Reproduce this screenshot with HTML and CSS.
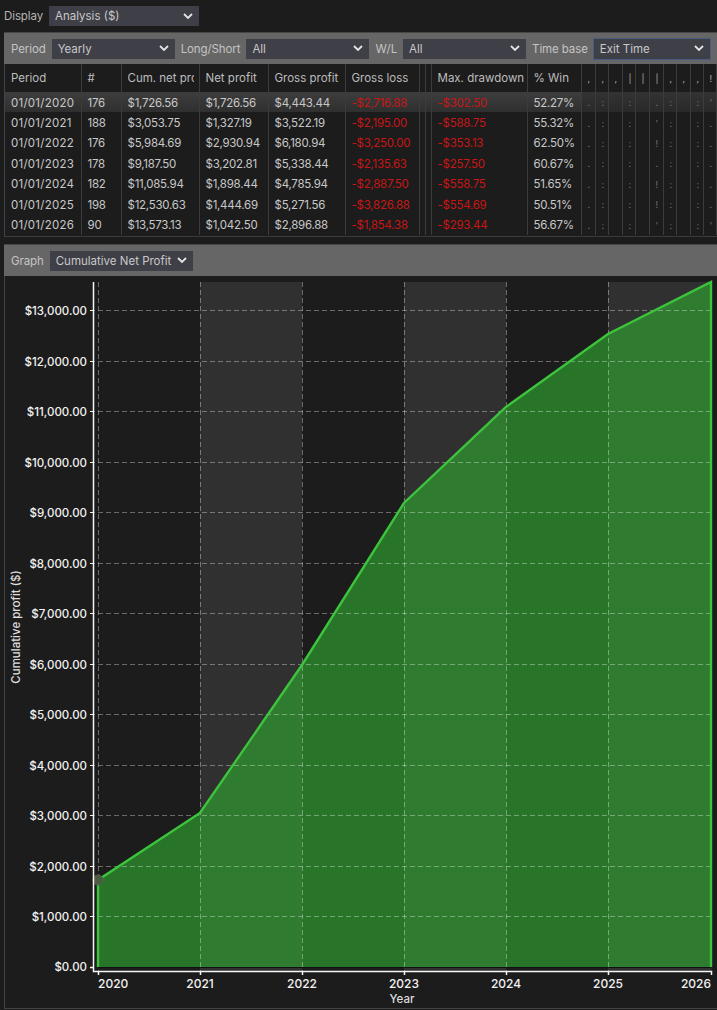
FILE: index.html
```html
<!DOCTYPE html>
<html lang="en">
<head>
    <meta charset="UTF-8">
    <meta name="viewport" content="width=device-width, initial-scale=1.0">
    <title>Analysis</title>
    <link rel="stylesheet" href="styles.css">
</head>
<body>
    <svg width="0" height="0" class="defs">
        <symbol id="chevron" viewBox="0 0 10 7"><path d="M1 1l4 4 4-4" fill="none" stroke="currentColor" stroke-width="1.8"/></symbol>
    </svg>

    <div class="display-row">
        <span class="label">Display</span>
        <div class="select select-display"><span>Analysis ($)</span><svg class="chevron"><use href="#chevron"/></svg></div>
    </div>

    <div class="bar">
        <span class="label">Period</span>
        <div class="select select-filter"><span>Yearly</span><svg class="chevron"><use href="#chevron"/></svg></div>
        <span class="label">Long/Short</span>
        <div class="select select-filter"><span>All</span><svg class="chevron"><use href="#chevron"/></svg></div>
        <span class="label">W/L</span>
        <div class="select select-filter"><span>All</span><svg class="chevron"><use href="#chevron"/></svg></div>
        <span class="label">Time base</span>
        <div class="select select-time"><span>Exit Time</span><svg class="chevron"><use href="#chevron"/></svg></div>
    </div>

    <div class="stats-wrap">
        <table class="stats">
            <colgroup>
                <col class="c-period"><col class="c-count"><col class="c-cum"><col class="c-net"><col class="c-gross">
                <col class="c-loss"><col class="c-gap"><col class="c-gap"><col class="c-dd"><col class="c-win">
                <col class="c-wide"><col class="c-thin"><col class="c-wide"><col class="c-thin"><col class="c-wide">
                <col class="c-wide"><col class="c-thin"><col class="c-wide"><col class="c-thin"><col class="c-thin">
            </colgroup>
            <thead>
                <tr>
                    <th>Period</th><th>#</th><th><span class="clip">Cum. net profit</span></th><th>Net profit</th><th>Gross profit</th>
                    <th>Gross loss</th><th></th><th></th><th>Max. drawdown</th><th>% Win</th>
                    <th class="tiny">,</th><th class="tiny">,</th><th class="tiny">,</th><th class="tiny">|</th><th class="tiny">|</th>
                    <th class="tiny">|</th><th class="tiny">,</th><th class="tiny">,</th><th class="tiny">,</th><th class="tiny">!</th>
                </tr>
            </thead>
            <tbody>
                <tr class="selected">
                    <td>01/01/2020</td><td>176</td><td>$1,726.56</td><td>$1,726.56</td><td>$4,443.44</td>
                    <td class="neg">-$2,716.88</td><td></td><td></td><td class="neg">-$302.50</td><td>52.27%</td>
                    <td class="tiny">.</td><td class="tiny">:</td><td class="tiny"></td><td class="tiny">:</td><td class="tiny"></td>
                    <td class="tiny">.</td><td class="tiny">:</td><td class="tiny"></td><td class="tiny">:</td><td class="tiny">'</td>
                </tr>
                <tr>
                    <td>01/01/2021</td><td>188</td><td>$3,053.75</td><td>$1,327.19</td><td>$3,522.19</td>
                    <td class="neg">-$2,195.00</td><td></td><td></td><td class="neg">-$588.75</td><td>55.32%</td>
                    <td class="tiny">.</td><td class="tiny">:</td><td class="tiny"></td><td class="tiny">:</td><td class="tiny"></td>
                    <td class="tiny">'</td><td class="tiny">:</td><td class="tiny"></td><td class="tiny">:</td><td class="tiny">.</td>
                </tr>
                <tr>
                    <td>01/01/2022</td><td>176</td><td>$5,984.69</td><td>$2,930.94</td><td>$6,180.94</td>
                    <td class="neg">-$3,250.00</td><td></td><td></td><td class="neg">-$353.13</td><td>62.50%</td>
                    <td class="tiny">.</td><td class="tiny">:</td><td class="tiny"></td><td class="tiny">:</td><td class="tiny"></td>
                    <td class="tiny">!</td><td class="tiny">:</td><td class="tiny"></td><td class="tiny">:</td><td class="tiny">.</td>
                </tr>
                <tr>
                    <td>01/01/2023</td><td>178</td><td>$9,187.50</td><td>$3,202.81</td><td>$5,338.44</td>
                    <td class="neg">-$2,135.63</td><td></td><td></td><td class="neg">-$257.50</td><td>60.67%</td>
                    <td class="tiny">.</td><td class="tiny">:</td><td class="tiny"></td><td class="tiny">:</td><td class="tiny"></td>
                    <td class="tiny">.</td><td class="tiny">:</td><td class="tiny"></td><td class="tiny">:</td><td class="tiny">.</td>
                </tr>
                <tr>
                    <td>01/01/2024</td><td>182</td><td>$11,085.94</td><td>$1,898.44</td><td>$4,785.94</td>
                    <td class="neg">-$2,887.50</td><td></td><td></td><td class="neg">-$558.75</td><td>51.65%</td>
                    <td class="tiny">.</td><td class="tiny">:</td><td class="tiny"></td><td class="tiny">:</td><td class="tiny"></td>
                    <td class="tiny">!</td><td class="tiny">:</td><td class="tiny"></td><td class="tiny">:</td><td class="tiny">.</td>
                </tr>
                <tr>
                    <td>01/01/2025</td><td>198</td><td>$12,530.63</td><td>$1,444.69</td><td>$5,271.56</td>
                    <td class="neg">-$3,826.88</td><td></td><td></td><td class="neg">-$554.69</td><td>50.51%</td>
                    <td class="tiny">.</td><td class="tiny">:</td><td class="tiny"></td><td class="tiny">:</td><td class="tiny"></td>
                    <td class="tiny">!</td><td class="tiny">:</td><td class="tiny"></td><td class="tiny">:</td><td class="tiny">.</td>
                </tr>
                <tr>
                    <td>01/01/2026</td><td>90</td><td>$13,573.13</td><td>$1,042.50</td><td>$2,896.88</td>
                    <td class="neg">-$1,854.38</td><td></td><td></td><td class="neg">-$293.44</td><td>56.67%</td>
                    <td class="tiny">.</td><td class="tiny">:</td><td class="tiny"></td><td class="tiny">:</td><td class="tiny"></td>
                    <td class="tiny">'</td><td class="tiny">:</td><td class="tiny"></td><td class="tiny">:</td><td class="tiny">'</td>
                </tr>
            </tbody>
        </table>
    </div>

    <div class="bar">
        <span class="label">Graph</span>
        <div class="select select-graph"><span>Cumulative Net Profit</span><svg class="chevron"><use href="#chevron"/></svg></div>
    </div>

    <div class="chart">
        <svg class="plot" width="713" height="732" viewBox="4 276 713 732">
            <g class="bands">
                <rect x="200" y="282" width="102" height="689"/>
                <rect x="404" y="282" width="102" height="689"/>
                <rect x="608" y="282" width="103.500" height="689"/>
            </g>
            <path class="area" d="M98 967V880L200 813 302 665 404 503 506 407 608 334 711 282V967Z"/>
            <path class="base" d="M98 967.500H711"/>
            <g class="grid">
                <path d="M90 310.500H711M90 361.500H711M90 411.500H711M90 462.500H711M90 512.500H711M90 563.500H711M90 613.500H711M90 664.500H711M90 714.500H711M90 765.500H711M90 815.500H711M90 866.500H711M90 916.500H711"/>
                <path d="M98.500 282V975M200.500 282V975M302.500 282V975M404.500 282V975M506.500 282V975M608.500 282V975"/>
            </g>
            <path class="line" d="M98 967V880L200 813 302 665 404 503 506 407 608 334 711 282V967"/>
            <circle class="marker" cx="98" cy="880" r="5"/>
            <path class="axis" d="M93.500 282V971.500H711.500V975M90 967.500H93.500M98.500 971.500V975M200.500 971.500V975M302.500 971.500V975M404.500 971.500V975M506.500 971.500V975M608.500 971.500V975"/>
            <path class="ticks" d="M90 310.500H93M90 361.500H93M90 411.500H93M90 462.500H93M90 512.500H93M90 563.500H93M90 613.500H93M90 664.500H93M90 714.500H93M90 765.500H93M90 815.500H93M90 866.500H93M90 916.500H93"/>
            <g class="y-labels">
                <text x="87" y="314.500">$13,000.00</text>
                <text x="87" y="365.500">$12,000.00</text>
                <text x="87" y="415.500">$11,000.00</text>
                <text x="87" y="466.500">$10,000.00</text>
                <text x="87" y="516.500">$9,000.00</text>
                <text x="87" y="567.500">$8,000.00</text>
                <text x="87" y="617.500">$7,000.00</text>
                <text x="87" y="668.500">$6,000.00</text>
                <text x="87" y="718.500">$5,000.00</text>
                <text x="87" y="769.500">$4,000.00</text>
                <text x="87" y="819.500">$3,000.00</text>
                <text x="87" y="870.500">$2,000.00</text>
                <text x="87" y="920.500">$1,000.00</text>
                <text x="87" y="971">$0.00</text>
            </g>
            <g class="x-labels">
                <text x="98" y="988" class="start">2020</text>
                <text x="200" y="988">2021</text>
                <text x="302" y="988">2022</text>
                <text x="404" y="988">2023</text>
                <text x="506" y="988">2024</text>
                <text x="608" y="988">2025</text>
                <text x="711" y="988" class="end">2026</text>
            </g>
            <text class="title" x="402" y="1003">Year</text>
            <text class="title" transform="translate(20 627) rotate(-90)">Cumulative profit ($)</text>
        </svg>
    </div>
</body>
</html>
```

FILE: styles.css
```css
html, body {
    margin: 0;
    height: 1010px;
    overflow: hidden;
}

body {
    background-color: #1c1c1c;
    color: #c8c8c8;
    font-family: Inter, "Liberation Sans", sans-serif;
    font-size: 11.500px;
    padding: 6px 0 0 4px;
    box-sizing: border-box;
}

.defs {
    position: absolute;
}

.display-row {
    display: flex;
    align-items: center;
    gap: 6px;
    height: 20px;
    margin-bottom: 6px;
    color: #b4b4b4;
}

.label {
    white-space: nowrap;
    letter-spacing: -0.100px;
}

.bar {
    display: flex;
    align-items: center;
    gap: 6px;
    height: 32px;
    padding-left: 7px;
    box-sizing: border-box;
    background-color: #666;
    border-top: 1px solid #474747;
    color: #c4c4c4;
}

.select {
    display: flex;
    align-items: center;
    justify-content: space-between;
    height: 20px;
    padding: 0 6px;
    box-sizing: border-box;
    background-color: #3f3f47;
    color: #c8c8c8;
    flex: none;
}

.chevron {
    width: 10px;
    height: 7px;
    color: #e4e4e4;
}

.select-display {
    width: 150px;
}

.select-filter {
    width: 123px;
}

.select-time {
    width: 116px;
    box-shadow: 0 0 0 1px #4a5a80;
}

.select-graph {
    width: 143px;
}

.stats-wrap {
    height: 173px;
    box-sizing: border-box;
    border-left: 1px solid #444;
    border-bottom: 1px solid #3c3c3c;
    margin-bottom: 7px;
}

.stats {
    border-collapse: collapse;
    table-layout: fixed;
    width: 711px;
    letter-spacing: -0.250px;
}

.c-period { width: 76px; }
.c-count { width: 40px; }
.c-cum { width: 78px; }
.c-net { width: 69px; }
.c-gross { width: 77px; }
.c-loss { width: 74px; }
.c-gap { width: 6px; }
.c-dd { width: 96px; }
.c-win { width: 54px; }
.c-wide { width: 14px; }
.c-thin { width: 13px; }

th, td {
    height: 20.400px;
    padding: 0 0 0 6px;
    box-sizing: border-box;
    border-right: 1px solid #3c3c3c;
    font-weight: 400;
    text-align: left;
    white-space: nowrap;
    overflow: hidden;
}

td {
    padding-top: 1px;
}

th {
    height: 28px;
    color: #bcbcbc;
    letter-spacing: 0;
}

td:first-child {
    letter-spacing: 0.250px;
}

.clip {
    display: block;
    width: 66px;
    overflow: hidden;
}

.selected td {
    background: linear-gradient(#3d3d3d, #2f2f2f);
}

.neg {
    color: #c81616;
}

.tiny {
    padding-left: 6px;
    font-size: 9px;
    color: #9a9a9a;
    opacity: 0.7;
}

th.tiny {
    color: #e0e0e0;
}

.chart {
    width: 713px;
    height: 733px;
    border-left: 1px solid #444;
    border-bottom: 1px solid #444;
    box-sizing: border-box;
}

.plot {
    display: block;
    margin-left: -1px;
}

.bands rect {
    fill: #303030;
}

.area {
    fill: #2fa52f;
    fill-opacity: 0.65;
}

.line {
    fill: none;
    stroke: #3dc43d;
    stroke-width: 2.400;
}

.base {
    stroke: #111;
    stroke-width: 1;
}

.grid path {
    fill: none;
    stroke: #fff;
    stroke-opacity: 0.35;
    stroke-dasharray: 5 3;
}

.axis {
    fill: none;
    stroke: #f6f6f6;
    stroke-width: 1.500;
}

.ticks {
    fill: none;
    stroke: #f6f6f6;
    stroke-width: 1.200;
}

.marker {
    fill: #4a5c42;
    stroke: #55604f;
}

.plot text {
    fill: #f2f2f2;
    font-size: 11.500px;
    font-weight: 500;
}

.y-labels text {
    text-anchor: end;
}

.x-labels text {
    font-size: 12px;
    text-anchor: middle;
}

.x-labels .start {
    text-anchor: start;
}

.x-labels .end {
    text-anchor: end;
}

.plot .title {
    fill: #dedede;
    text-anchor: middle;
}
```
